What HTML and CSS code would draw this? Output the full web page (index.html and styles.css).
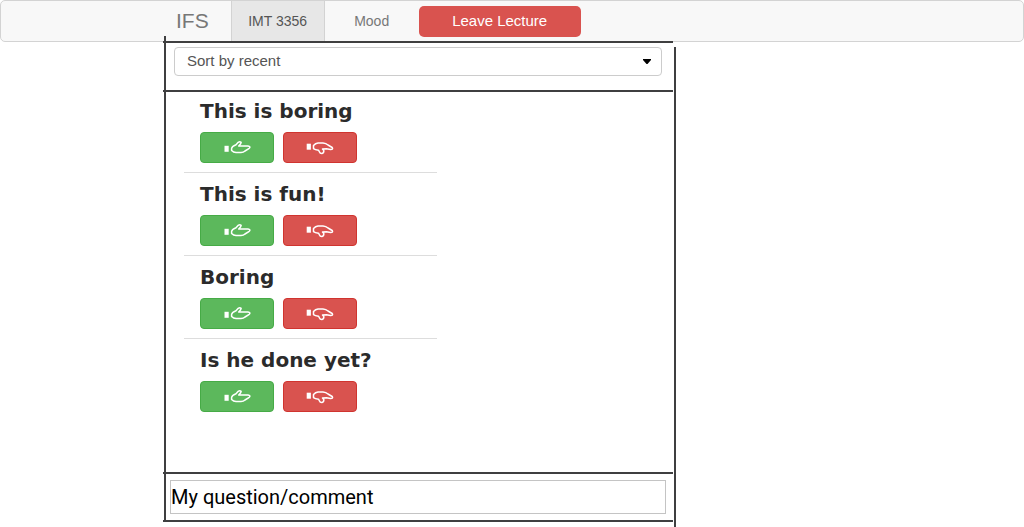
FILE: index.html
```html
<!DOCTYPE html>
<html lang="en">
<head>
<meta charset="utf-8">
<meta name="viewport" content="width=device-width, initial-scale=1">
<title>IFS - IMT 3356</title>
<link rel="stylesheet" href="styles.css">
</head>
<body>
<svg class="sprite" aria-hidden="true">
  <symbol id="thumb-up" viewBox="0 0 28 16">
    <path d="M1.500 5.800h4.200v6h-4.200z" fill="currentColor"/>
    <path d="M8.600 8.500 Q8.800 6.500 13 4.800 L15.200 2.300 Q16.800 1.200 18.200 2.300 Q18.200 3.800 15.700 6 L25 6.100 Q28 6.500 26.200 8.300 L22 11 Q20.500 12.500 18 12.600 L13 12.600 Q10.500 12.400 8.600 10.500z" fill="none" stroke="currentColor" stroke-width="1.500" stroke-linejoin="round"/>
  </symbol>
  <symbol id="thumb-down" viewBox="0 0 28 16">
    <path d="M0.700 3.700h4.200v6h-4.200z" fill="currentColor"/>
    <path d="M7.500 5.500 Q9.500 3.200 12 3 L17 3 Q20 3.200 22 5 L26.200 7.500 Q27.500 9.300 24.500 9.500 L20.500 8.800 L16.500 9 L17.800 10.500 Q18 13 16 13.400 Q14 13.500 13.500 12 L12.500 10.200 Q9 9.800 7.500 8.600z" fill="none" stroke="currentColor" stroke-width="1.500" stroke-linejoin="round"/>
  </symbol>
</svg>
<nav class="navbar">
  <a class="brand" href="#">IFS</a>
  <a class="tab tab-active" href="#">IMT 3356</a>
  <a class="tab" href="#">Mood</a>
  <button class="leave" type="button">Leave Lecture</button>
</nav>
<main class="board">
  <section class="sort">
    <select class="sort-select" aria-label="Sort order">
      <option>Sort by recent</option>
    </select>
    <svg class="caret" viewBox="0 0 8 5" aria-hidden="true"><path d="M0 0h8v1L4.500 5h-1L0 1z"/></svg>
  </section>
  <section class="feed">
    <ul class="comments">
      <li class="comment">
        <h2 class="title">This is boring</h2>
        <div class="votes">
          <button class="vote up" type="button" aria-label="Vote up"><svg class="icon"><use href="#thumb-up"/></svg></button>
          <button class="vote down" type="button" aria-label="Vote down"><svg class="icon"><use href="#thumb-down"/></svg></button>
        </div>
      </li>
      <li class="comment">
        <h2 class="title">This is fun!</h2>
        <div class="votes">
          <button class="vote up" type="button" aria-label="Vote up"><svg class="icon"><use href="#thumb-up"/></svg></button>
          <button class="vote down" type="button" aria-label="Vote down"><svg class="icon"><use href="#thumb-down"/></svg></button>
        </div>
      </li>
      <li class="comment">
        <h2 class="title">Boring</h2>
        <div class="votes">
          <button class="vote up" type="button" aria-label="Vote up"><svg class="icon"><use href="#thumb-up"/></svg></button>
          <button class="vote down" type="button" aria-label="Vote down"><svg class="icon"><use href="#thumb-down"/></svg></button>
        </div>
      </li>
      <li class="comment">
        <h2 class="title">Is he done yet?</h2>
        <div class="votes">
          <button class="vote up" type="button" aria-label="Vote up"><svg class="icon"><use href="#thumb-up"/></svg></button>
          <button class="vote down" type="button" aria-label="Vote down"><svg class="icon"><use href="#thumb-down"/></svg></button>
        </div>
      </li>
    </ul>
  </section>
  <form class="composer">
    <input class="question" type="text" aria-label="My question/comment" value="My question/comment">
  </form>
</main>
</body>
</html>
```

FILE: styles.css
```css
* {
  box-sizing: border-box;
}

body {
  margin: 0;
  min-height: 100vh;
  display: flex;
  flex-direction: column;
  background: #fff;
  color: #555;
  font: 15px/20px "Liberation Sans", Arial, sans-serif;
}

.sprite {
  display: none;
}

.navbar {
  display: flex;
  align-items: center;
  min-height: 42px;
  padding-left: 161px;
  background: #f8f8f8;
  border: 1px solid #d3d3d3;
  border-radius: 5px;
}

.brand,
.tab {
  color: #777;
  text-decoration: none;
}

.brand {
  padding: 0 22px 0 14px;
  font-size: 21px;
}

.tab {
  align-self: stretch;
  display: flex;
  align-items: center;
  justify-content: center;
  min-width: 94px;
  font-size: 14px;
}

.tab-active {
  background: #e7e7e7;
  border: solid #d3d3d3;
  border-width: 0 1px;
  color: #555;
}

.leave {
  width: 162px;
  height: 31px;
  padding: 0;
  border: 0;
  border-radius: 5px;
  background: #d9534f;
  color: #fff;
  font: inherit;
}

/* Board with ruled lines that overshoot at the corners */
.board {
  position: relative;
  flex: 1;
  display: flex;
  flex-direction: column;
  width: 100%;
  max-width: 513px;
  margin: -1px 0 0 163px;
  padding: 0 3px 5px 0;
}

.board::before,
.board::after {
  content: "";
  position: absolute;
  width: 2px;
  background: #3f3f40;
}

.board::before {
  top: -5px;
  bottom: 5px;
  left: 1px;
}

.board::after {
  top: 6px;
  bottom: 0;
  right: 0;
}

.sort,
.feed,
.composer {
  border-bottom: 2px solid #3f3f40;
}

.sort {
  display: grid;
  align-items: center;
  padding: 4px 11px 14px;
  border-top: 2px solid #3f3f40;
}

.sort-select,
.caret {
  grid-area: 1 / 1;
}

.sort-select {
  appearance: none;
  width: 100%;
  height: 29px;
  padding: 0 32px 2px 12px;
  border: 1px solid #ccc;
  border-radius: 4px;
  background: #fff;
  color: #555;
  font: inherit;
}

.caret {
  justify-self: end;
  width: 8px;
  height: 5px;
  margin-right: 11px;
  pointer-events: none;
}

.feed {
  flex: 1;
  padding: 5px 21px;
}

.comments {
  display: flex;
  flex-direction: column;
  gap: 7px;
  max-width: 253px;
  margin: 0;
  padding: 0;
  list-style: none;
}

.comment {
  padding: 0 0 9px 16px;
  border-bottom: 1px solid #ddd;
}

.comment:last-child {
  border-bottom: 0;
}

.title {
  margin: 0 0 7px;
  color: #2b2b2b;
  font: bold 20px/28px "DejaVu Sans", Verdana, sans-serif;
  white-space: nowrap;
}

.votes {
  display: flex;
  gap: 9px;
}

.vote {
  display: flex;
  align-items: center;
  justify-content: center;
  width: 74px;
  height: 31px;
  padding: 0;
  border: 1px solid;
  border-radius: 4px;
  color: #fff;
}

.up {
  background: #5cb85c;
  border-color: #46ab46;
}

.down {
  background: #d9534f;
  border-color: #d0342f;
}

.icon {
  width: 28px;
  height: 16px;
}

.composer {
  padding: 6px 7px;
}

.question {
  display: block;
  width: 100%;
  height: 34px;
  padding: 0;
  border: 1px solid #c4c4c4;
  background: #fff;
  color: #000;
  font: 20px Roboto, sans-serif;
}
```
